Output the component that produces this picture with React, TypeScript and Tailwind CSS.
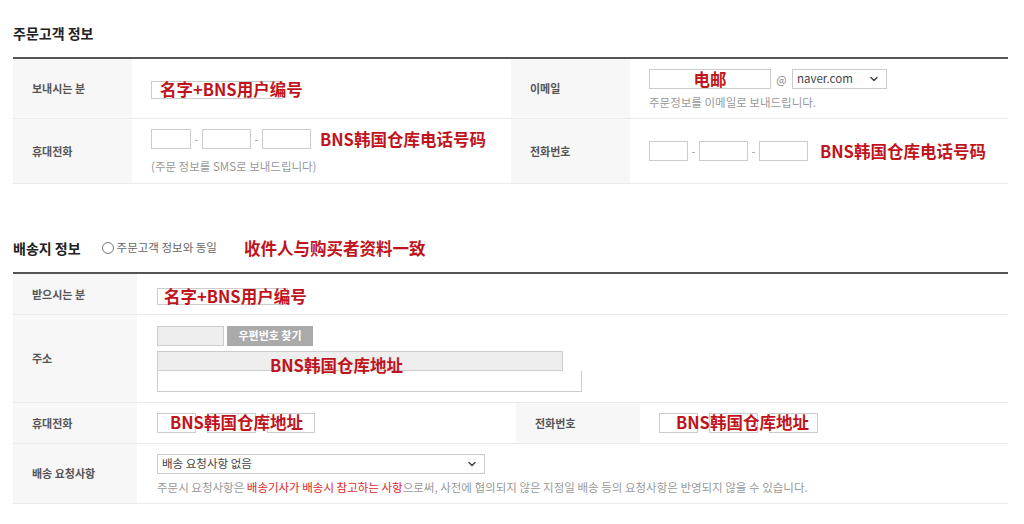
import { ChevronDown } from "lucide-react";

const red = "font-['Noto_Sans_CJK_SC',sans-serif] font-bold text-[16.5px] leading-none text-[#bf141c] whitespace-nowrap";

const Label = ({ children, w = "w-[119px]" }: { children: React.ReactNode; w?: string }) => (
  <div className={`${w} shrink-0 bg-[#f7f7f7] flex items-center pl-[19px] text-[11px] font-semibold text-[#555]`}>{children}</div>
);

const Box = ({ w, gray }: { w: string; gray?: boolean }) => (
  <div className={`${w} h-[20px] border border-[#ccc] ${gray ? "bg-[#eee]" : "bg-white"}`} />
);

const PhoneDash = ({ widths }: { widths: string[] }) => (
  <div className="flex items-center">
    <Box w={widths[0]} />
    <span className="w-[11px] text-center text-[11px] text-[#999]">-</span>
    <Box w={widths[1]} />
    <span className="w-[11px] text-center text-[11px] text-[#999]">-</span>
    <Box w={widths[2]} />
  </div>
);

const Select = ({ w, text }: { w: string; text: string }) => (
  <div className={`${w} h-[20px] border border-[#ccc] bg-white flex items-center justify-between pl-[4px] pr-[6px] text-[11.5px] text-[#444]`}>
    <span>{text}</span>
    <ChevronDown size={12} strokeWidth={3} className="text-[#444]" />
  </div>
);

export default function App() {
  return (
    <div className="w-[1024px] h-[524px] bg-white px-[13px] pr-[16px] font-['Noto_Sans_CJK_KR',sans-serif] text-[#333]">
      {/* 주문고객 정보 */}
      <div className="pt-[24px] h-[42px] text-[14px] font-bold text-[#222] leading-[18px]">주문고객 정보</div>
      <div className="mt-[15px] border-t-2 border-[#555]">
        <div className="flex h-[60px] border-b border-[#ebebeb]">
          <Label>보내시는 분</Label>
          <div className="w-[379px] flex items-center pl-[19px] pt-[3px]">
            <div className="relative w-[132px] h-[18px] border border-[#ccc]">
              <span className={`${red} absolute left-[8px] top-[-1px]`}>名字+BNS用户编号</span>
            </div>
          </div>
          <Label>이메일</Label>
          <div className="flex-1 flex flex-col justify-center pl-[19px] pt-[1px]">
            <div className="flex items-center">
              <div className="w-[122px] h-[20px] border border-[#ccc] flex items-center justify-center">
                <span className={red}>电邮</span>
              </div>
              <span className="w-[21px] text-center text-[11px] text-[#888]">@</span>
              <Select w="w-[95px]" text="naver.com" />
            </div>
            <div className="mt-[6px] text-[11.5px] text-[#999] leading-[14px]">주문정보를 이메일로 보내드립니다.</div>
          </div>
        </div>
        <div className="flex h-[65px] border-b border-[#ebebeb]">
          <Label>휴대전화</Label>
          <div className="w-[379px] flex flex-col justify-center pl-[19px]">
            <div className="flex items-center">
              <PhoneDash widths={["w-[40px]", "w-[49px]", "w-[49px]"]} />
              <span className={`${red} ml-[9px]`}>BNS韩国仓库电话号码</span>
            </div>
            <div className="mt-[10px] text-[11.5px] text-[#999] leading-[14px]">(주문 정보를 SMS로 보내드립니다)</div>
          </div>
          <Label>전화번호</Label>
          <div className="flex-1 flex items-center pl-[19px]">
            <PhoneDash widths={["w-[39px]", "w-[49px]", "w-[49px]"]} />
            <span className={`${red} ml-[12px]`}>BNS韩国仓库电话号码</span>
          </div>
        </div>
      </div>

      {/* 배송지 정보 */}
      <div className="mt-[55px] h-[18px] flex items-center">
        <span className="text-[14px] font-bold text-[#222] leading-[18px]">배송지 정보</span>
        <span className="ml-[21px] w-[12px] h-[12px] rounded-full border border-[#777]" />
        <span className="ml-[3px] text-[11.5px] text-[#666]">주문고객 정보와 동일</span>
        <span className={`${red} ml-[27px]`}>收件人与购买者资料一致</span>
      </div>
      <div className="mt-[15px] border-t-2 border-[#555]">
        <div className="flex h-[41px] border-b border-[#ebebeb]">
          <Label w="w-[124px]">받으시는 분</Label>
          <div className="flex-1 flex items-center pl-[20px] pt-[5px]">
            <div className="relative w-[131px] h-[17px] border border-[#ccc]">
              <span className={`${red} absolute left-[6px] top-[-1px]`}>名字+BNS用户编号</span>
            </div>
          </div>
        </div>
        <div className="flex h-[88px] border-b border-[#ebebeb]">
          <Label w="w-[124px]">주소</Label>
          <div className="flex-1 flex flex-col justify-center pl-[20px]">
            <div className="flex items-center gap-[3px]">
              <Box w="w-[67px]" gray />
              <div className="w-[86px] h-[20px] bg-[#aaa] flex items-center justify-center text-[11px] font-semibold text-white">우편번호 찾기</div>
            </div>
            <div className="relative mt-[5px]">
              <Box w="w-[406px]" gray />
              <div className="w-[425px] h-[21px] border border-[#ccc] border-t-0 bg-white" />
              <span className={`${red} absolute left-[113px] top-[6px]`}>BNS韩国仓库地址</span>
            </div>
          </div>
        </div>
        <div className="flex h-[41px] border-b border-[#ebebeb]">
          <Label w="w-[124px]">휴대전화</Label>
          <div className="w-[379px] flex items-center pl-[20px]">
            <div className="relative flex items-center gap-[11px]">
              <Box w="w-[39px]" />
              <Box w="w-[49px]" />
              <Box w="w-[48px]" />
              <span className={`${red} absolute left-[13px] top-[1px]`}>BNS韩国仓库地址</span>
            </div>
          </div>
          <Label w="w-[124px]">전화번호</Label>
          <div className="flex-1 flex items-center pl-[19px]">
            <div className="relative flex items-center gap-[11px]">
              <Box w="w-[39px]" />
              <Box w="w-[49px]" />
              <Box w="w-[49px]" />
              <span className={`${red} absolute left-[17px] top-[1px]`}>BNS韩国仓库地址</span>
            </div>
          </div>
        </div>
        <div className="flex h-[60px] border-b border-[#ebebeb]">
          <Label w="w-[124px]">배송 요청사항</Label>
          <div className="flex-1 flex flex-col justify-center pl-[20px]">
            <Select w="w-[328px]" text="배송 요청사항 없음" />
            <div className="mt-[6px] text-[11.5px] text-[#999] leading-[14px]">
              주문시 요청사항은 <span className="text-[#e0262c]">배송기사가 배송시 참고하는 사항</span>으로써, 사전에 협의되지 않은 지정일 배송 등의 요청사항은 반영되지 않을 수 있습니다.
            </div>
          </div>
        </div>
      </div>
    </div>
  );
}
